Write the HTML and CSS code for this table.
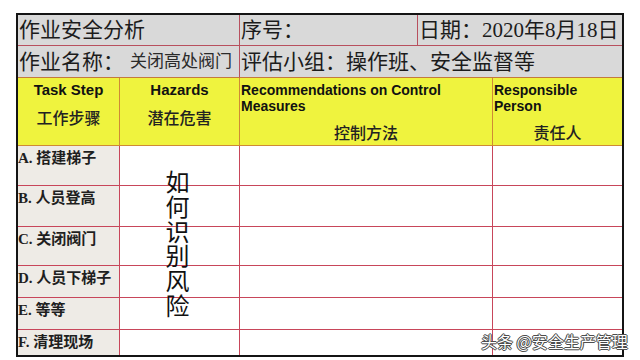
FILE: index.html
```html
<!DOCTYPE html>
<html lang="zh">
<head>
<meta charset="utf-8">
<title>作业安全分析</title>
<link rel="stylesheet" href="styles.css">
</head>
<body>
<div class="sheet">
  <div class="c top span12">作业安全分析</div>
  <div class="c top">序号：</div>
  <div class="c top span45 last">日期：2020年8月18日</div>

  <div class="c top span12 row2">作业名称：<span class="job">关闭高处阀门</span></div>
  <div class="c top span345 row2 last">评估小组：操作班、安全监督等</div>

  <div class="c head center">
    <div class="en">Task Step</div>
    <div class="zh zh-a">工作步骤</div>
  </div>
  <div class="c head center">
    <div class="en">Hazards</div>
    <div class="zh zh-a">潜在危害</div>
  </div>
  <div class="c head span34">
    <div class="en small">Recommendations on Control Measures</div>
    <div class="zh zh-b">控制方法</div>
  </div>
  <div class="c head last">
    <div class="en small">Responsible Person</div>
    <div class="zh zh-b">责任人</div>
  </div>

  <div class="c step">A. 搭建梯子</div><div class="c data"></div><div class="c data span34"></div><div class="c data last"></div>
  <div class="c step">B. 人员登高</div><div class="c data"></div><div class="c data span34"></div><div class="c data last"></div>
  <div class="c step">C. 关闭阀门</div><div class="c data"></div><div class="c data span34"></div><div class="c data last"></div>
  <div class="c step">D. 人员下梯子</div><div class="c data"></div><div class="c data span34"></div><div class="c data last"></div>
  <div class="c step">E. 等等</div><div class="c data"></div><div class="c data span34"></div><div class="c data last"></div>
  <div class="c step end">F. 清理现场</div><div class="c data end"></div><div class="c data span34 end"></div><div class="c data last end"></div>

  <div class="vtext">如何识别风险</div>
</div>
<div class="watermark">头条 @安全生产管理</div>
</body>
</html>
```

FILE: styles.css
```css
* { box-sizing: border-box; }

html, body {
  margin: 0;
  padding: 0;
  background: #ffffff;
}

body {
  width: 640px;
  height: 360px;
  overflow: hidden;
  position: relative;
  font-family: "Liberation Serif", "Noto Sans CJK SC", serif;
  color: #1c1c1c;
}

.sheet {
  position: relative;
  margin: 13px 0 0 16px;
  width: 608px;
  border: 2px solid #141414;
  display: grid;
  grid-template-columns: 102px 120px 178px 75px 129px;
  grid-template-rows: 31px 32px 68px 40px 41px 39px 32px 32px 25px;
}

.c {
  border-right: 1px solid #c8465a;
  border-bottom: 1px solid #c8465a;
  min-width: 0;
}

.c.last { border-right: none; }
.c.end { border-bottom: none; }

.span12 { grid-column: span 2; }
.span34 { grid-column: span 2; }
.span45 { grid-column: span 2; }
.span345 { grid-column: span 3; }

.top {
  background: #d9d9d9;
  font-size: 21px;
  line-height: 28px;
  padding-left: 1px;
  display: flex;
  align-items: center;
  white-space: nowrap;
  border-color: #b8505e;
}

.top.row2 {
  border-bottom-color: #c47a3c;
}

.job {
  font-size: 17px;
  margin-left: 6px;
  color: #2a2a2a;
}

.head {
  background: #eff33e;
  border-color: #cf8a35;
  padding: 3px 1px 0 1px;
}

.head.center { text-align: center; }

.en {
  font-family: "Liberation Sans", Arial, sans-serif;
  font-weight: bold;
  font-size: 15px;
  line-height: 18px;
  color: #111;
}

.en.small {
  font-size: 14px;
  line-height: 16px;
  text-align: left;
  padding-top: 1px;
}

.zh {
  font-family: "Noto Sans CJK SC", sans-serif;
  font-size: 16px;
  line-height: 20px;
  font-weight: 500;
  color: #222;
}

.zh-a { margin-top: 8px; }
.zh-b { margin-top: 8px; text-align: center; }

.step {
  background: #eeebe6;
  font-family: "Liberation Serif", "Noto Sans CJK SC", serif;
  font-weight: bold;
  font-size: 15px;
  line-height: 20px;
  padding-top: 2px;
  white-space: nowrap;
  color: #1f1f1f;
}

.data { background: #ffffff; }

.vtext {
  position: absolute;
  left: 147px;
  top: 155px;
  width: 25px;
  writing-mode: vertical-rl;
  text-orientation: upright;
  letter-spacing: 0.7px;
  font-family: "Noto Sans CJK SC", sans-serif;
  font-size: 24px;
  line-height: 25px;
  color: #111;
}

.watermark {
  position: absolute;
  left: 481px;
  top: 331px;
  font-family: "Noto Sans CJK SC", sans-serif;
  font-size: 16px;
  line-height: 20px;
  color: #ffffff;
  white-space: nowrap;
  text-shadow: 0 0 1px #333, 0 0 1px #333, 1px 0 0 #555, -1px 0 0 #555, 0 1px 0 #555, 0 -1px 0 #555;
}
```
